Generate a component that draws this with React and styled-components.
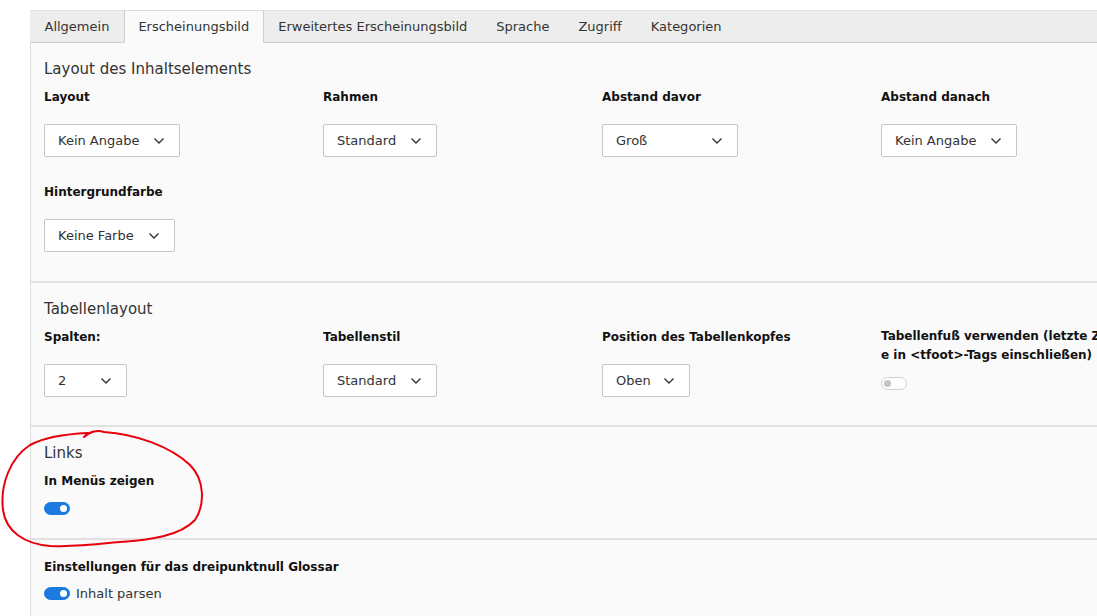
import React from "react";
import styled, { createGlobalStyle } from "styled-components";

const GlobalStyle = createGlobalStyle`
  html, body { margin: 0; padding: 0; background: #ffffff; }
  body {
    font-family: "DejaVu Sans", Verdana, sans-serif;
    color: #333333;
    overflow: hidden;
    width: 1097px;
    height: 616px;
  }
`;

const Page = styled.div`
  position: relative;
  padding: 10px 0 0 30px;
  width: 1200px;
`;

const TabBar = styled.div`
  display: flex;
  height: 31px;
  background: #ededed;
  border-top: 1px solid #e4e4e4;
  border-bottom: 1px solid #cfcfcf;
`;

const Tab = styled.div`
  padding: 0 13.5px;
  font-size: 13px;
  line-height: 32px;
  color: #333;
  white-space: nowrap;
  background: ${(p) => (p.$active ? "#fafafa" : "transparent")};
  border: 1px solid ${(p) => (p.$active ? "#cfcfcf" : "transparent")};
  border-top: none;
  border-bottom-color: ${(p) => (p.$active ? "#fafafa" : "transparent")};
  margin-bottom: -1px;
  position: relative;
  z-index: 1;
  ${(p) => (p.$active ? "border-top: 1px solid #dcdcdc; margin-top: -1px;" : "")}
`;

const Panel = styled.div`
  background: #fafafa;
  border-left: 1px solid #dcdcdc;
`;

const Section = styled.div`
  padding: ${(p) => p.$pad};
  border-top: ${(p) => (p.$divider ? "2px solid #e1e1e1" : "none")};
`;

const SectionTitle = styled.div`
  font-size: 15px;
  line-height: 20px;
  color: #333;
  margin-bottom: 8px;
  padding-left: 13px;
`;

const Grid = styled.div`
  display: grid;
  grid-template-columns: repeat(4, 279px);
  row-gap: 25px;
  padding-left: 13px;
`;

const Field = styled.div`
  display: flex;
  flex-direction: column;
  align-items: flex-start;
  min-width: 0;
  overflow: visible;
`;

const Label = styled.div`
  font-weight: bold;
  font-size: 12px;
  line-height: ${(p) => (p.$tight ? "19px" : "20px")};
  color: #111;
  white-space: nowrap;
`;

const SelectBox = styled.div`
  margin-top: 17px;
  height: 33px;
  box-sizing: border-box;
  border: 1px solid #c6c6c6;
  border-radius: 2px;
  background: #fff;
  display: flex;
  align-items: center;
  justify-content: space-between;
  padding: 0 14px 0 13px;
  font-size: 13px;
  color: #333;
`;

const SwitchRow = styled.div`
  margin-top: ${(p) => p.$mt || "8px"};
  height: 20px;
  display: flex;
  align-items: center;
  gap: 6px;
  font-size: 13px;
  color: #333;
`;

const Switch = styled.span`
  display: inline-block;
  position: relative;
  box-sizing: border-box;
  width: 26px;
  height: 13px;
  border-radius: 7px;
  background: ${(p) => (p.$on ? "#1a7ae0" : "#ffffff")};
  border: 1px solid ${(p) => (p.$on ? "#1a7ae0" : "#cfcfcf")};
  &::after {
    content: "";
    position: absolute;
    top: 2px;
    ${(p) => (p.$on ? "right: 2px;" : "left: 2px;")}
    width: 7px;
    height: 7px;
    border-radius: 50%;
    background: ${(p) => (p.$on ? "#ffffff" : "#c4c4c4")};
  }
`;

const Annotation = styled.svg`
  position: absolute;
  left: 0;
  top: 0;
  pointer-events: none;
  overflow: visible;
`;

const Chevron = () => (
  <svg width="12" height="8" viewBox="0 0 12 8" fill="none">
    <path d="M1.5 1.5 L6 6 L10.5 1.5" stroke="#333" strokeWidth="1.4" />
  </svg>
);

const Select = ({ value, width }) => (
  <SelectBox style={{ width }}>
    <span>{value}</span>
    <Chevron />
  </SelectBox>
);

const tabs = [
  "Allgemein",
  "Erscheinungsbild",
  "Erweitertes Erscheinungsbild",
  "Sprache",
  "Zugriff",
  "Kategorien",
];

export default function App() {
  return (
    <>
      <GlobalStyle />
      <Page>
        <TabBar>
          {tabs.map((t) => (
            <Tab key={t} $active={t === "Erscheinungsbild"}>
              {t}
            </Tab>
          ))}
        </TabBar>
        <Panel>
          <Section $pad="16px 0 29px">
            <SectionTitle>Layout des Inhaltselements</SectionTitle>
            <Grid>
              <Field>
                <Label>Layout</Label>
                <Select value="Kein Angabe" width="136px" />
              </Field>
              <Field>
                <Label>Rahmen</Label>
                <Select value="Standard" width="114px" />
              </Field>
              <Field>
                <Label>Abstand davor</Label>
                <Select value="Groß" width="136px" />
              </Field>
              <Field>
                <Label>Abstand danach</Label>
                <Select value="Kein Angabe" width="136px" />
              </Field>
              <Field>
                <Label>Hintergrundfarbe</Label>
                <Select value="Keine Farbe" width="131px" />
              </Field>
            </Grid>
          </Section>
          <Section $divider $pad="16px 0 28px">
            <SectionTitle>Tabellenlayout</SectionTitle>
            <Grid>
              <Field>
                <Label>Spalten:</Label>
                <Select value="2" width="83px" />
              </Field>
              <Field>
                <Label>Tabellenstil</Label>
                <Select value="Standard" width="114px" />
              </Field>
              <Field>
                <Label>Position des Tabellenkopfes</Label>
                <Select value="Oben" width="88px" />
              </Field>
              <Field>
                <Label $tight>
                  Tabellenfuß verwenden (letzte Zeil
                  <br />
                  e in &lt;tfoot&gt;-Tags einschließen)
                </Label>
                <SwitchRow $mt="8px">
                  <Switch />
                </SwitchRow>
              </Field>
            </Grid>
          </Section>
          <Section $divider $pad="16px 0 20px">
            <SectionTitle>Links</SectionTitle>
            <Grid>
              <Field>
                <Label>In Menüs zeigen</Label>
                <SwitchRow $mt="7px">
                  <Switch $on />
                </SwitchRow>
              </Field>
            </Grid>
          </Section>
          <Section $divider $pad="17px 0 20px">
            <Grid>
              <Field>
                <Label>Einstellungen für das dreipunktnull Glossar</Label>
                <SwitchRow $mt="6px">
                  <Switch $on />
                  <span>Inhalt parsen</span>
                </SwitchRow>
              </Field>
            </Grid>
          </Section>
        </Panel>
        <Annotation width="1097" height="616">
          <path
            d="M 84 437 C 90 431, 98 430, 104 432 C 135 434, 170 446, 190 465 C 205 480, 205 505, 195 520 C 180 536, 150 540, 120 542 C 95 544, 70 547, 50 546 C 25 544, 6 532, 3 510 C 0 485, 10 458, 30 445 C 45 437, 65 434, 88 433"
            fill="none"
            stroke="#e8000b"
            strokeWidth="2"
            strokeLinecap="round"
          />
        </Annotation>
      </Page>
    </>
  );
}
